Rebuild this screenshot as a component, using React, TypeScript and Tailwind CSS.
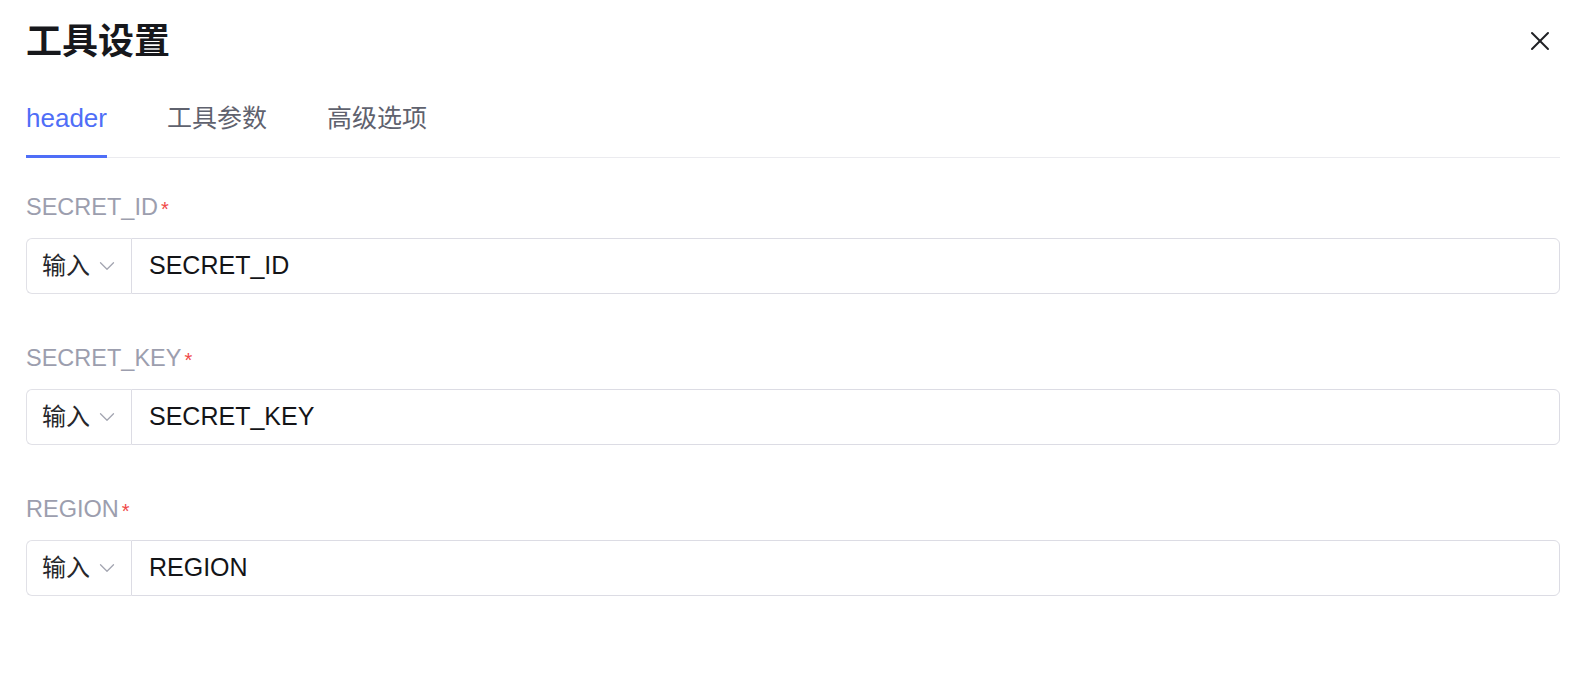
import { X, ChevronDown } from 'lucide-react';

const fields = [
  { label: 'SECRET_ID', value: 'SECRET_ID' },
  { label: 'SECRET_KEY', value: 'SECRET_KEY' },
  { label: 'REGION', value: 'REGION' },
];

const tabs = [
  { name: 'header', size: 'text-[26px]' },
  { name: '工具参数', size: 'text-[25px]' },
  { name: '高级选项', size: 'text-[25px]' },
];

export default function App() {
  return (
    <div
      className="w-[1578px] h-[694px] bg-white pl-[26px] pr-[18px] overflow-hidden"
      style={{ fontFamily: '"Liberation Sans", "Noto Sans CJK SC", sans-serif' }}
    >
      {/* Header */}
      <div className="flex justify-between pt-[17px] h-[86px] items-start">
        <h1 className="text-[36px] font-bold leading-[50px] text-[#17181c]">工具设置</h1>
        <button className="mt-[8px] mr-[4px] text-[#1f2024]">
          <X className="w-[32px] h-[32px]" strokeWidth={1.5} />
        </button>
      </div>

      {/* Tabs */}
      <div className="flex gap-[60px] border-b border-[#ebebef]">
        {tabs.map((tab, i) => (
          <div
            key={tab.name}
            className={`${tab.size} leading-[36px] pt-[14px] pb-[19px] border-b-[3px] -mb-[1px] ${
              i === 0 ? 'text-[#4f6ef7] border-[#4f6ef7]' : 'text-[#5f626e] border-transparent'
            }`}
          >
            {tab.name}
          </div>
        ))}
      </div>

      {/* Fields */}
      <div className="pt-[30px] flex flex-col gap-[45px]">
        {fields.map((f) => (
          <div key={f.label}>
            <div className="text-[23.5px] leading-[34px] text-[#9c9eae] flex items-center">
              {f.label}
              <span className="text-[#f04848] text-[20px] ml-[3px] mt-[4px]">*</span>
            </div>
            <div className="mt-[12px] flex h-[56px]">
              <div className="w-[105px] shrink-0 flex items-center pl-[15px] gap-[4px] border border-r-0 border-[#e1e1e7] rounded-l-[6px] text-[24px] text-[#26272b]">
                <span>输入</span>
                <ChevronDown className="w-[26px] h-[26px] text-[#a3a5b1]" strokeWidth={1.2} />
              </div>
              <div className="flex-1 flex items-center pl-[17px] border border-[#dcdce4] rounded-r-[6px] text-[25px] text-[#131417]">
                {f.value}
              </div>
            </div>
          </div>
        ))}
      </div>
    </div>
  );
}
